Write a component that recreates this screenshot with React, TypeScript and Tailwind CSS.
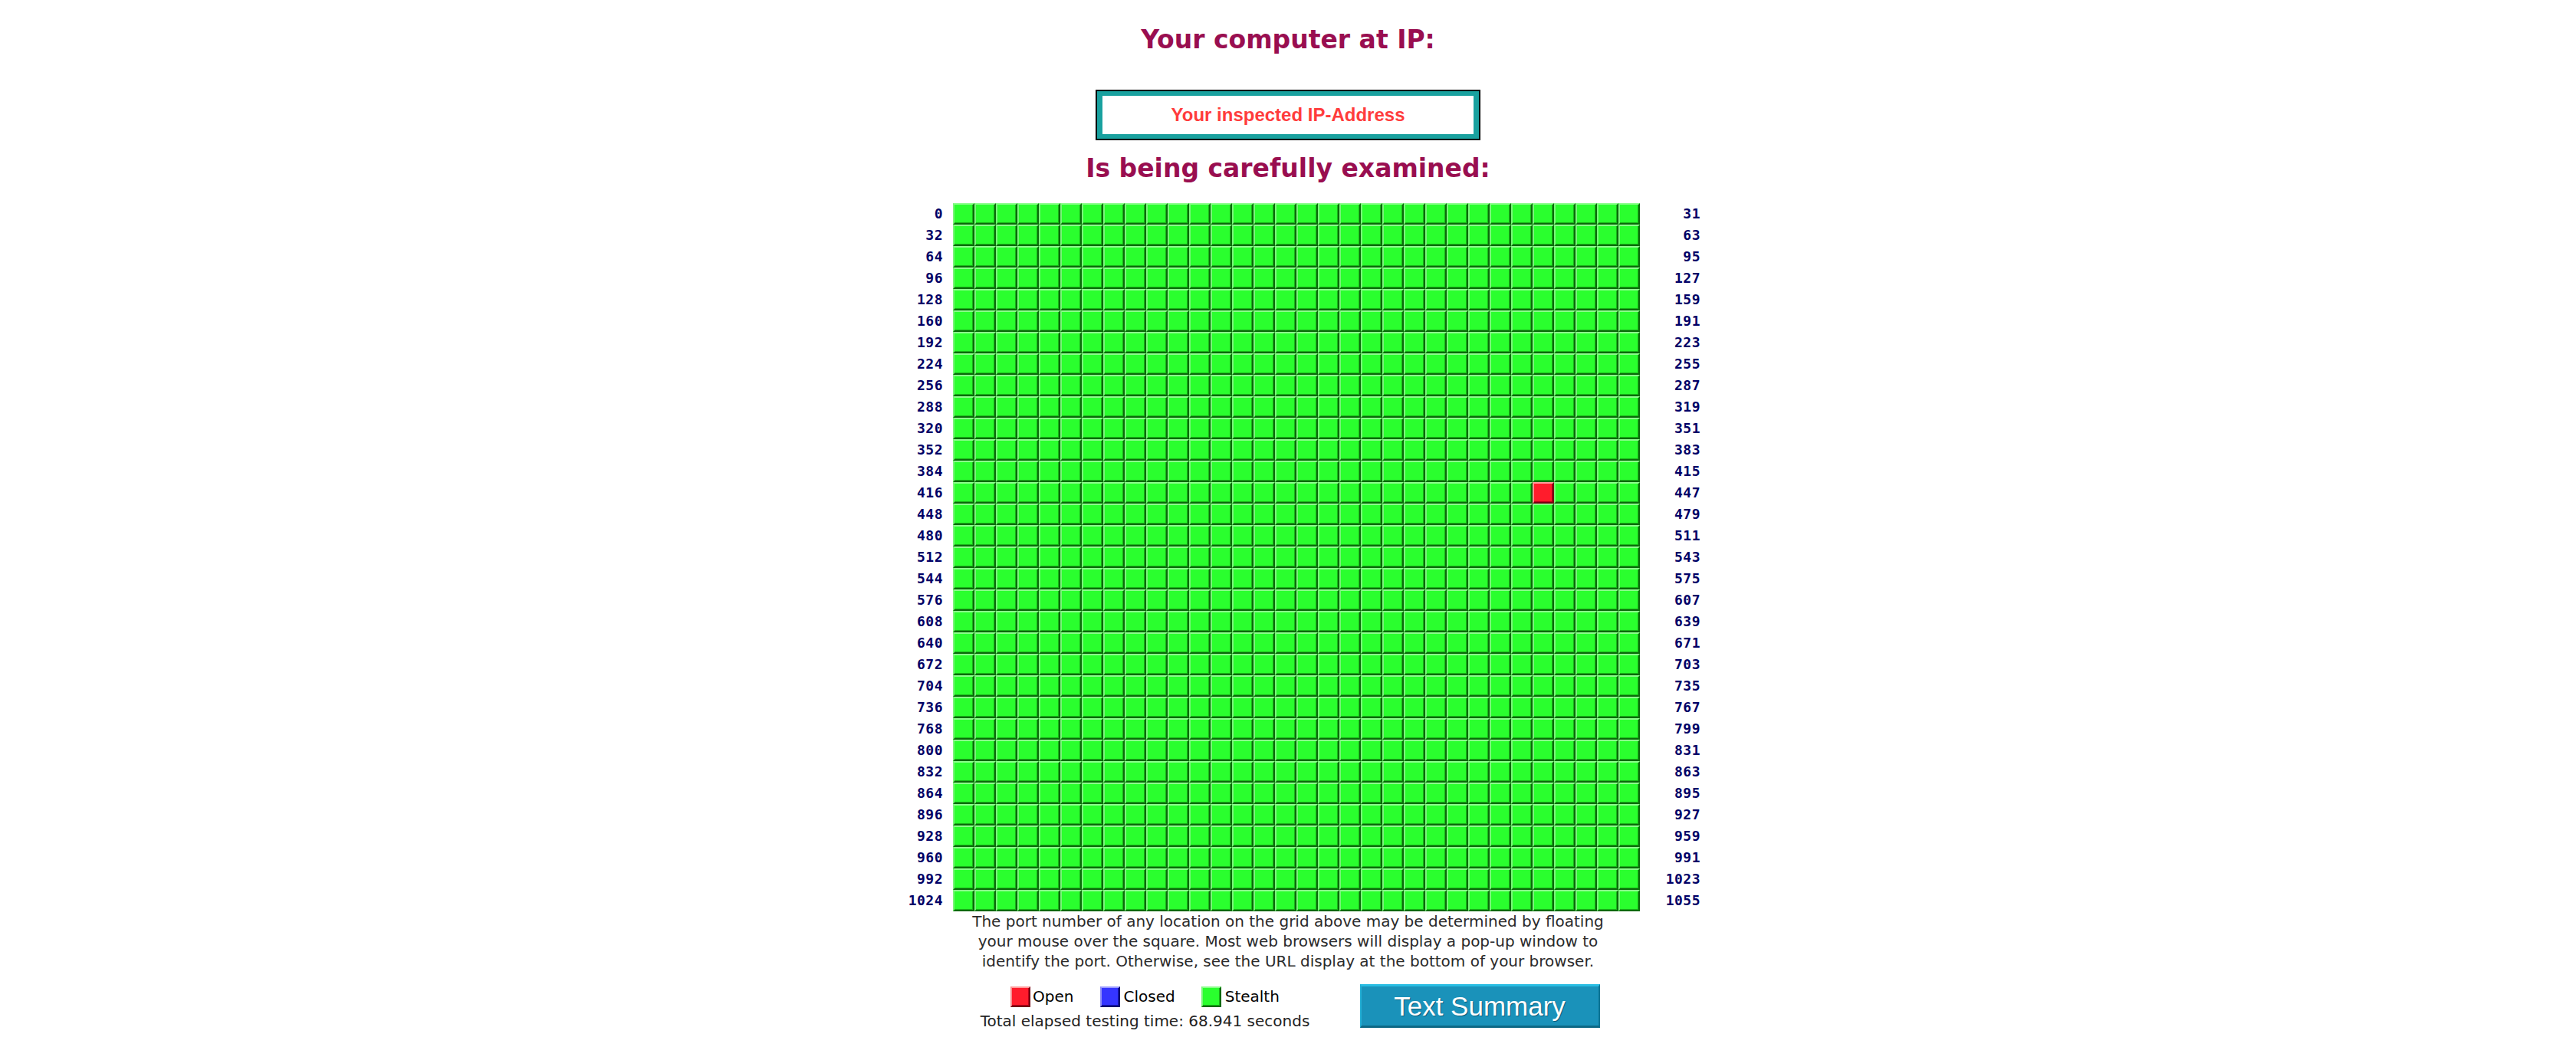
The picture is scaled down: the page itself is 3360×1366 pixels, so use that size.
import React from 'react';

// --- port grid: 33 rows of 32 ports, port 443 reported open ---
const ROWS = 33;
const COLS = 32;
const OPEN_PORTS = [443];

type PortState = 'open' | 'closed' | 'stealth';

const cellClass: Record<PortState, string> = {
  stealth:
    'bg-[#2aff2e] border-t-[#8cfd8c] border-l-[#7af57a] border-b-[#0a6a0a] border-r-[#0a6a0a] shadow-[inset_-1px_-1px_0_#18b418]',
  open:
    'bg-[#ff1c2c] border-t-[#ff9c9c] border-l-[#f59090] border-b-[#730010] border-r-[#730010] shadow-[inset_-1px_-1px_0_#b8001a]',
  closed:
    'bg-[#3535ff] border-t-[#9c9cff] border-l-[#9090f5] border-b-[#00006e] border-r-[#00006e] shadow-[inset_-1px_-1px_0_#1a1ab8]',
};

const PortCell: React.FC<{ port: number; state: PortState }> = ({ port, state }) => (
  <div title={`Port ${port}`} className={`w-[28px] h-[28px] border-2 ${cellClass[state]}`} />
);

const LegendBox: React.FC<{ state: PortState }> = ({ state }) => (
  <div className={`w-[26px] h-[27px] border-2 ${cellClass[state]}`} />
);

const PortGrid: React.FC = () => {
  const rows = Array.from({ length: ROWS }, (_, r) => r);
  const cols = Array.from({ length: COLS }, (_, c) => c);

  return (
    <div className="w-[1076px] mx-auto flex flex-col">
      {rows.map((r) => (
        <div key={r} className="flex h-[28px]">
          <div className="w-[101px] pr-[13px] text-right text-[18px] leading-[28px] tracking-[0.5px] font-bold text-[#000066] font-['DejaVu_Sans_Mono',monospace]">
            {r * COLS}
          </div>
          <div className="flex">
            {cols.map((c) => {
              const port = r * COLS + c;
              const state: PortState = OPEN_PORTS.includes(port) ? 'open' : 'stealth';
              return <PortCell key={c} port={port} state={state} />;
            })}
          </div>
          <div className="w-[79px] text-right text-[18px] leading-[28px] tracking-[0.5px] font-bold text-[#000066] font-['DejaVu_Sans_Mono',monospace]">
            {r * COLS + COLS - 1}
          </div>
        </div>
      ))}
    </div>
  );
};

export default function App() {
  return (
    <div className="w-full min-h-[1366px] bg-white flex flex-col items-center">
      <h1 className="mt-[32px] text-[33px] leading-[40px] font-bold text-[#990e50] font-['DejaVu_Sans',sans-serif]">
        Your computer at IP:
      </h1>

      <div className="mt-[45px] border-2 border-black">
        <div className="w-[498px] border-x-[7px] border-y-[6px] border-[#19a19f] bg-white">
          <div className="h-[50px] leading-[50px] text-center text-[24px] font-bold text-[#ff3c3c] font-['Liberation_Sans',Arial,sans-serif]">
            Your inspected IP-Address
          </div>
        </div>
      </div>

      <h2 className="mt-[17px] text-[33px] leading-[40px] font-bold text-[#990e50] font-['DejaVu_Sans',sans-serif]">
        Is being carefully examined:
      </h2>

      <div className="mt-[25px] w-full">
        <PortGrid />
      </div>

      <p className="w-[896px] text-center text-[20px] leading-[26px] text-[#2b2b2b] font-['DejaVu_Sans',sans-serif]">
        The port number of any location on the grid above may be determined by floating
        <br />
        your mouse over the square. Most web browsers will display a pop-up window to
        <br />
        identify the port. Otherwise, see the URL display at the bottom of your browser.
      </p>

      <div className="mt-[17px] flex items-start gap-[60px]">
        <div className="w-[440px] pt-[3px] flex flex-col items-center font-['DejaVu_Sans',sans-serif] text-[20px] text-black">
          <div className="flex items-center h-[27px] leading-[27px]">
            <LegendBox state="open" />
            <span className="ml-[3px]">Open</span>
            <span className="ml-[34px]" />
            <LegendBox state="closed" />
            <span className="ml-[5px]">Closed</span>
            <span className="ml-[34px]" />
            <LegendBox state="stealth" />
            <span className="ml-[5px]">Stealth</span>
          </div>
          <div className="mt-[5px] leading-[26px] text-[#222]">Total elapsed testing time: 68.941 seconds</div>
        </div>

        <button className="w-[313px] h-[57px] bg-[#1a92ba] border-t-[3px] border-l-[2px] border-b-[3px] border-r-[2px] border-t-[#29bde3] border-l-[#22aed4] border-b-[#0d6885] border-r-[#0f7595] text-white text-[35px] leading-[51px] font-['Liberation_Sans',Arial,sans-serif] [text-shadow:1px_1px_0_#0c5d78]">
          Text Summary
        </button>
      </div>
    </div>
  );
}
